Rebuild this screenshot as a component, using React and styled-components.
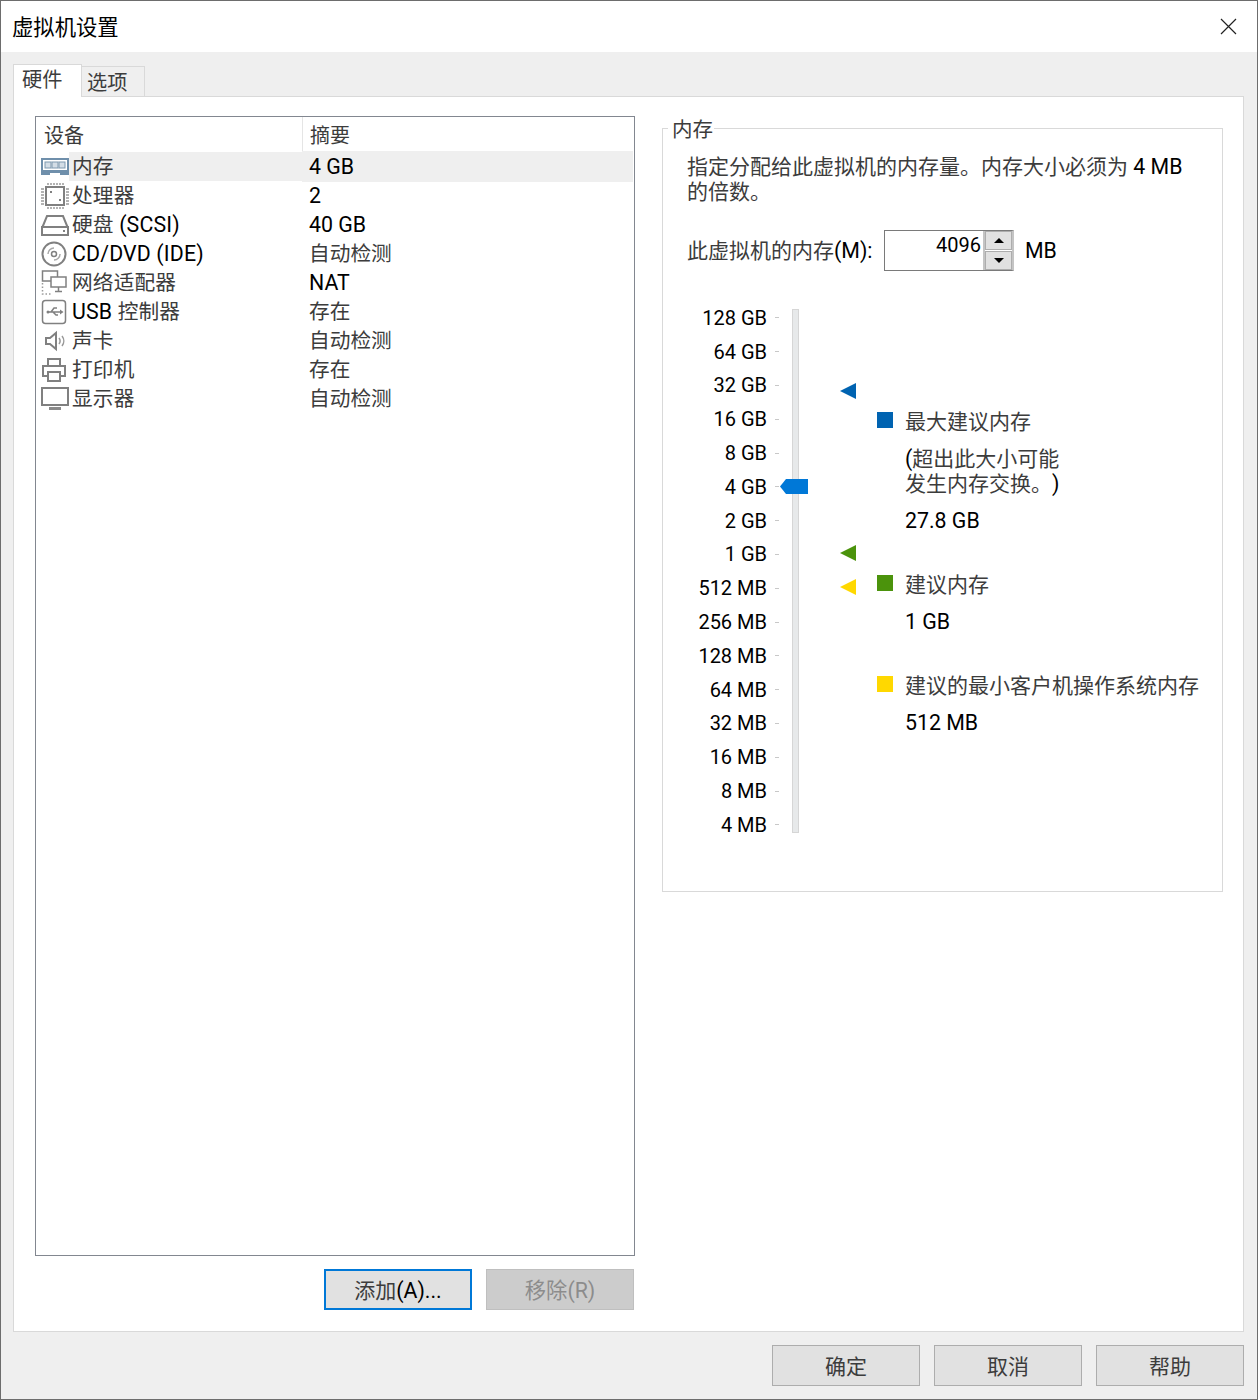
import React from "react";
import styled, { createGlobalStyle } from "styled-components";

const Global = createGlobalStyle`
  html, body {
    margin: 0;
    padding: 0;
    background: #fff;
  }
  * {
    box-sizing: border-box;
  }
  body {
    font-family: Roboto, "Noto Sans CJK SC", sans-serif;
    font-size: 21.33px;
    color: #000;
    text-spacing-trim: space-all;
  }
`;

const Han = styled.span`
  color: #3c3c3c;
  font-size: var(--han-size, 21px);
  line-height: 1;
`;

// wraps the chinese runs so they read lighter than the latin text, as in the thin system font
const Text = ({ children }) =>
  String(children)
    .split(/([\u3000-\u9fff]+)/)
    .map((part, i) => (i % 2 ? <Han key={i}>{part}</Han> : part));

const Window = styled.div`
  width: 1258px;
  height: 1400px;
  border: 1px solid #6d6d6d;
  display: flex;
  flex-direction: column;
  background: #efefef;
  overflow: hidden;
`;

const TitleBar = styled.div`
  height: 51px;
  flex: none;
  background: #fff;
  display: flex;
  align-items: center;
  justify-content: space-between;
  padding: 0 20px 2px 11px;
  color: #000;
`;

const CloseIcon = styled.svg`
  width: 17px;
  height: 17px;
  margin-top: 2px;
`;

const Body = styled.div`
  flex: 1;
  display: flex;
  flex-direction: column;
  padding: 0 13px 0 12px;
  min-height: 0;
`;

const TabStrip = styled.div`
  --han-size: 20.2px;
  height: 45px;
  flex: none;
  display: flex;
  align-items: flex-end;
  margin-bottom: -1px;
`;

const Tab = styled.div`
  position: relative;
  height: ${(p) => (p.$active ? 33 : 31)}px;
  width: ${(p) => (p.$active ? 69 : 63)}px;
  padding-left: ${(p) => (p.$active ? 8 : 5)}px;
  line-height: ${(p) => (p.$active ? 30 : 32)}px;
  background: ${(p) => (p.$active ? "#fff" : "#efefef")};
  border: 1px solid #d9d9d9;
  border-bottom: ${(p) => (p.$active ? "none" : "1px solid #d9d9d9")};
  border-left: ${(p) => (p.$active ? "1px solid #d9d9d9" : "none")};
  z-index: ${(p) => (p.$active ? 2 : 1)};
`;

const Panel = styled.div`
  flex: 1;
  min-height: 0;
  background: #fff;
  border: 1px solid #d9d9d9;
  display: flex;
  gap: 27px;
  padding: 19px 20px 20px 21px;
`;

const LeftColumn = styled.div`
  width: 600px;
  flex: none;
  display: flex;
  flex-direction: column;
`;

const DeviceList = styled.div`
  --han-size: 20.7px;
  height: 1140px;
  border: 1px solid #828790;
  padding: 0 1px;
`;

const ListHeader = styled.div`
  --han-size: 20px;
  display: grid;
  grid-template-columns: 266px 1fr;
  height: 34px;
`;

const HeaderCell = styled.div`
  padding-left: 7px;
  line-height: 37px;
  border-right: ${(p) => (p.$second ? "none" : "1px solid #e5e5e5")};
`;

const Row = styled.div`
  display: grid;
  grid-template-columns: 265px 1fr;
  height: 29px;
  line-height: 30px;
`;

const DeviceCell = styled.div`
  display: flex;
  align-items: center;
  white-space: nowrap;
`;

const IconBox = styled.div`
  width: 29px;
  height: 29px;
  flex: none;
  margin-left: 4px;
  display: flex;
  align-items: center;
  background: #fff;
`;

const DeviceName = styled.div`
  flex: 1;
  height: 29px;
  padding-left: 3px;
  margin-left: -1px;
  letter-spacing: 0.15px;
  background: ${(p) => (p.$selected ? "#efefef" : "transparent")};
`;

const SummaryCell = styled.div`
  padding-left: 7px;
  line-height: 31px;
  background: ${(p) => (p.$selected ? "#efefef" : "transparent")};
`;

const ListActions = styled.div`
  display: flex;
  justify-content: flex-end;
  gap: 14px;
  margin-top: 13px;
  padding-right: 1px;
`;

const Button = styled.div`
  width: 148px;
  height: 41px;
  text-align: center;
  background: ${(p) => (p.$disabled ? "#cccccc" : "#e1e1e1")};
  color: ${(p) => (p.$disabled ? "#8c8c8c" : "#000")};
  border: ${(p) =>
    p.$focused
      ? "2px solid #0078d7"
      : p.$disabled
      ? "1px solid #bfbfbf"
      : "1px solid #adadad"};
  line-height: ${(p) => (p.$focused ? 39 : 41)}px;
`;

const Group = styled.fieldset`
  width: 561px;
  height: 776px;
  flex: none;
  margin: 0;
  padding: 0 0 0 24px;
  border: 1px solid #d9d9d9;
  min-width: 0;
`;

const GroupTitle = styled.legend`
  --han-size: 20.5px;
  margin-left: -19px;
  padding: 0 1px 0 4px;
  height: 25px;
  line-height: 27px;
`;

const Description = styled.div`
  margin-top: 13px;
  width: 510px;
  line-height: 25px;
`;

const MemoryRow = styled.div`
  display: flex;
  align-items: center;
  margin-top: 26px;
  height: 41px;
`;

const MemoryLabel = styled.div`
  width: 197px;
  flex: none;
  white-space: nowrap;
`;

const Spinner = styled.div`
  width: 130px;
  height: 41px;
  display: flex;
  border: 1px solid #7a7a7a;
  border-right: 2px solid #c4c4c4;
  background: #fff;
`;

const SpinnerValue = styled.div`
  flex: 1;
  text-align: right;
  padding-right: 2px;
  font-size: 20px;
  line-height: 29px;
`;

const SpinnerButtons = styled.div`
  width: 29px;
  display: flex;
  flex-direction: column;
  gap: 1px;
  background: #fff;
  border-left: 2px solid #c4c4c4;
`;

const SpinnerButton = styled.div`
  flex: 1;
  background: #e1e1e1;
  border: 1px solid #adadad;
  display: flex;
  align-items: center;
  justify-content: center;
`;

const Arrow = styled.div`
  width: 0;
  height: 0;
  border-left: 5px solid transparent;
  border-right: 5px solid transparent;
  ${(p) => (p.$down ? "border-top: 5px solid #000;" : "border-bottom: 5px solid #000;")}
`;

const Unit = styled.div`
  margin-left: 11px;
`;

const SliderArea = styled.div`
  display: flex;
  margin-top: 28px;
`;

const Scale = styled.div`
  width: 92px;
  flex: none;
  padding-top: 2px;
  font-size: 20px;
`;

const ScaleRow = styled.div`
  height: 33.8px;
  display: flex;
  justify-content: flex-end;
  align-items: center;
  gap: 8px;
  white-space: nowrap;
`;

const Tick = styled.div`
  width: 4px;
  height: 1px;
  background: #c8c8c8;
  flex: none;
`;

const Track = styled.div`
  position: relative;
  width: 7px;
  height: 524px;
  flex: none;
  margin: 10px 0 0 13px;
  background: #e7e9ea;
  border: 1px solid #d6d6d6;
`;

const Thumb = styled.svg`
  position: absolute;
  left: -13px;
  top: 169px;
`;

const Markers = styled.div`
  position: relative;
  width: 78px;
  flex: none;
`;

const Marker = styled.svg`
  position: absolute;
  left: 41px;
  top: ${(p) => p.$top}px;
`;

const Legend = styled.div`
  flex: 1;
  padding-top: 110px;
  min-width: 0;
`;

const LegendEntry = styled.div`
  display: grid;
  grid-template-columns: 28px 1fr;
  margin-bottom: 39px;
`;

const Swatch = styled.div`
  width: 16px;
  height: 16px;
  margin-top: 3px;
  background: ${(p) => p.$color};
`;

const LegendText = styled.div`
  grid-column: 2;
  line-height: 25px;
  margin-top: ${(p) => p.$top || 0}px;
  white-space: nowrap;
`;

const Footer = styled.div`
  height: 67px;
  flex: none;
  display: flex;
  justify-content: flex-end;
  align-items: flex-start;
  gap: 14px;
  padding-top: 13px;
`;

const line = { fill: "none", stroke: "#808080", strokeWidth: 2 };

const MemoryIcon = () => (
  <svg width="28" height="18" viewBox="0 0 28 18">
    <rect x="1" y="1" width="26" height="12" fill="none" stroke="#6f8fab" strokeWidth="2" />
    <path d="M0 13h28v4H19v-2H9v2H0z" fill="#6f8fab" />
    <rect x="4" y="4" width="6" height="6" fill="#d3dde6" stroke="#7e99b0" />
    <rect x="11" y="4" width="6" height="6" fill="#d3dde6" stroke="#7e99b0" />
    <rect x="18" y="4" width="6" height="6" fill="#d3dde6" stroke="#7e99b0" />
  </svg>
);

const CpuIcon = () => (
  <svg width="28" height="28" viewBox="0 0 28 28">
    <rect x="5" y="5" width="18" height="18" fill="none" stroke="#808080" strokeWidth="2" />
    <path d="M7 1v2M10 1v2M13 1v2M16 1v2M19 1v2M22 1v2M7 25v2M10 25v2M13 25v2M16 25v2M19 25v2M22 25v2M0 7h3M0 10h3M0 13h3M0 16h3M0 19h3M0 22h3M25 7h3M25 10h3M25 13h3M25 16h3M25 19h3M25 22h3" stroke="#9a9a9a" strokeWidth="1.5" />
    <rect x="9" y="9" width="2" height="2" fill="#808080" />
    <rect x="18" y="17" width="2" height="2" fill="#808080" />
  </svg>
);

const DiskIcon = () => (
  <svg width="28" height="22" viewBox="0 0 28 22">
    <path d="M1.5 13 6 2h16l4.5 11" {...line} />
    <rect x="1" y="13" width="26" height="8" fill="none" stroke="#808080" strokeWidth="2" />
    <rect x="22" y="16" width="2" height="2" fill="#808080" />
  </svg>
);

const CdIcon = () => (
  <svg width="26" height="26" viewBox="0 0 26 26">
    <circle cx="13" cy="13" r="11.5" {...line} />
    <circle cx="13" cy="13" r="2.5" fill="none" stroke="#808080" strokeWidth="1.5" />
    <path d="M7 13a6 6 0 0 1 6-6M19 13a6 6 0 0 1-6 6" fill="none" stroke="#a8a8a8" strokeWidth="1.5" />
  </svg>
);

const NetworkIcon = () => (
  <svg width="26" height="26" viewBox="0 0 26 26">
    <rect x="1.5" y="1" width="15" height="10" fill="#fff" stroke="#808080" strokeWidth="1.5" />
    <rect x="10" y="7" width="15" height="10" fill="#fff" stroke="#808080" strokeWidth="1.5" />
    <path d="M17.5 17v4M14 21.5h7" stroke="#808080" strokeWidth="1.5" />
    <path d="M1.5 13v11h10" fill="none" stroke="#999" strokeWidth="1.5" strokeDasharray="1.5 2" />
  </svg>
);

const UsbIcon = () => (
  <svg width="26" height="26" viewBox="0 0 26 26">
    <rect x="1.5" y="1.5" width="23" height="23" rx="3" fill="none" stroke="#808080" strokeWidth="1.5" />
    <path d="M7 13h12M10 13l3-4h3M12 13l3 3h2" fill="none" stroke="#808080" strokeWidth="1.5" />
    <path d="M19 10.5v5l3.5-2.5z" fill="#808080" />
    <circle cx="7" cy="13" r="1.5" fill="#808080" />
  </svg>
);

const SoundIcon = () => (
  <svg width="26" height="22" viewBox="0 0 26 22">
    <path d="M5 8v6h4l6 5V3L9 8z" fill="none" stroke="#808080" strokeWidth="2" />
    <path d="M18 8a5 5 0 0 1 0 6M21 6a8 8 0 0 1 0 10" fill="none" stroke="#999" strokeWidth="1.5" />
  </svg>
);

const PrinterIcon = () => (
  <svg width="26" height="25" viewBox="0 0 26 25">
    <path d="M7 9V2h12v7" {...line} />
    <path d="M7 19H2V9h22v10h-5" {...line} />
    <rect x="7" y="15" width="12" height="9" {...line} />
  </svg>
);

const MonitorIcon = () => (
  <svg width="28" height="24" viewBox="0 0 28 24">
    <rect x="1" y="1" width="26" height="17" {...line} />
    <rect x="8" y="20" width="12" height="3" fill="#8a8a8a" />
  </svg>
);

const devices = [
  { icon: <MemoryIcon />, name: "内存", summary: "4 GB", selected: true },
  { icon: <CpuIcon />, name: "处理器", summary: "2" },
  { icon: <DiskIcon />, name: "硬盘 (SCSI)", summary: "40 GB" },
  { icon: <CdIcon />, name: "CD/DVD (IDE)", summary: "自动检测" },
  { icon: <NetworkIcon />, name: "网络适配器", summary: "NAT" },
  { icon: <UsbIcon />, name: "USB 控制器", summary: "存在" },
  { icon: <SoundIcon />, name: "声卡", summary: "自动检测" },
  { icon: <PrinterIcon />, name: "打印机", summary: "存在" },
  { icon: <MonitorIcon />, name: "显示器", summary: "自动检测" },
];

const scale = [
  "128 GB", "64 GB", "32 GB", "16 GB", "8 GB", "4 GB", "2 GB", "1 GB",
  "512 MB", "256 MB", "128 MB", "64 MB", "32 MB", "16 MB", "8 MB", "4 MB",
];

const Triangle = ({ top, color }) => (
  <Marker $top={top} width="16" height="16" viewBox="0 0 16 16">
    <path d="M0 8 16 0v16z" fill={color} />
  </Marker>
);

const App = () => {
  return (
    <>
      <Global />
      <Window>
        <TitleBar>
          虚拟机设置
          <CloseIcon viewBox="0 0 17 17">
            <path d="M1 1l15 15M16 1 1 16" stroke="#222" strokeWidth="1.2" fill="none" />
          </CloseIcon>
        </TitleBar>
        <Body>
          <TabStrip>
            <Tab $active><Text>硬件</Text></Tab>
            <Tab><Text>选项</Text></Tab>
          </TabStrip>
          <Panel>
            <LeftColumn>
              <DeviceList>
                <ListHeader>
                  <HeaderCell><Text>设备</Text></HeaderCell>
                  <HeaderCell $second><Text>摘要</Text></HeaderCell>
                </ListHeader>
                {devices.map((d) => (
                  <Row key={d.name}>
                    <DeviceCell>
                      <IconBox>{d.icon}</IconBox>
                      <DeviceName $selected={d.selected}><Text>{d.name}</Text></DeviceName>
                    </DeviceCell>
                    <SummaryCell $selected={d.selected}><Text>{d.summary}</Text></SummaryCell>
                  </Row>
                ))}
              </DeviceList>
              <ListActions>
                <Button $focused><Text>添加</Text>(A)...</Button>
                <Button $disabled>移除(R)</Button>
              </ListActions>
            </LeftColumn>
            <Group>
              <GroupTitle><Text>内存</Text></GroupTitle>
              <Description>
                <Text>指定分配给此虚拟机的内存量。内存大小必须为 4 MB 的倍数。</Text>
              </Description>
              <MemoryRow>
                <MemoryLabel><Text>此虚拟机的内存(M):</Text></MemoryLabel>
                <Spinner>
                  <SpinnerValue>4096</SpinnerValue>
                  <SpinnerButtons>
                    <SpinnerButton>
                      <Arrow />
                    </SpinnerButton>
                    <SpinnerButton>
                      <Arrow $down />
                    </SpinnerButton>
                  </SpinnerButtons>
                </Spinner>
                <Unit>MB</Unit>
              </MemoryRow>
              <SliderArea>
                <Scale>
                  {scale.map((s) => (
                    <ScaleRow key={s}>
                      {s}
                      <Tick />
                    </ScaleRow>
                  ))}
                </Scale>
                <Track>
                  <Thumb width="28" height="15" viewBox="0 0 28 15">
                    <path d="M0 7.5 6 0h22v15H6z" fill="#0078d7" />
                  </Thumb>
                </Track>
                <Markers>
                  <Triangle top={84} color="#0063b1" />
                  <Triangle top={246} color="#4b930c" />
                  <Triangle top={280} color="#ffd800" />
                </Markers>
                <Legend>
                  <LegendEntry>
                    <Swatch $color="#0063b1" />
                    <LegendText><Text>最大建议内存</Text></LegendText>
                    <LegendText $top={12}><Text>(超出此大小可能</Text></LegendText>
                    <LegendText><Text>发生内存交换。)</Text></LegendText>
                    <LegendText $top={12}>27.8 GB</LegendText>
                  </LegendEntry>
                  <LegendEntry>
                    <Swatch $color="#4b930c" />
                    <LegendText><Text>建议内存</Text></LegendText>
                    <LegendText $top={12}>1 GB</LegendText>
                  </LegendEntry>
                  <LegendEntry>
                    <Swatch $color="#ffd800" />
                    <LegendText><Text>建议的最小客户机操作系统内存</Text></LegendText>
                    <LegendText $top={12}>512 MB</LegendText>
                  </LegendEntry>
                </Legend>
              </SliderArea>
            </Group>
          </Panel>
          <Footer>
            <Button><Text>确定</Text></Button>
            <Button><Text>取消</Text></Button>
            <Button><Text>帮助</Text></Button>
          </Footer>
        </Body>
      </Window>
    </>
  );
};

export default App;
